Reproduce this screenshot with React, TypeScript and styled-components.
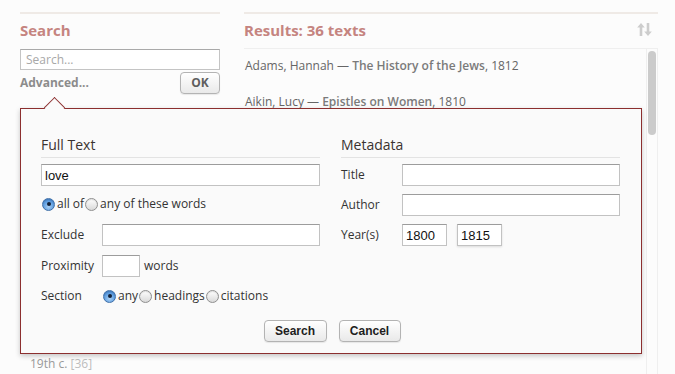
import React from "react";
import styled, { createGlobalStyle } from "styled-components";

const Global = createGlobalStyle`
  html, body { margin: 0; padding: 0; background: #fcfcfc; }
  body { font-family: "Open Sans", "DejaVu Sans", sans-serif; color: #333; }
  * { box-sizing: border-box; }
`;

const Page = styled.div`
  position: relative;
  height: 374px;
  overflow: hidden;
  padding: 12px 0 0 20px;
  display: grid;
  grid-template-columns: 200px 414px;
  column-gap: 24px;
`;

const Column = styled.div`
  border-top: 2px solid #efeae6;
  display: flex;
  flex-direction: column;
  min-height: 0;
`;

const HeadRow = styled.div`
  margin-top: 6px;
  height: 20px;
  display: flex;
  align-items: center;
  justify-content: space-between;
  padding-right: 6px;
`;

const Heading = styled.h2`
  margin: 0;
  font: 700 15px/20px "Open Sans", sans-serif;
  color: #c58480;
`;

const SearchInput = styled.input`
  margin-top: 9px;
  width: 200px;
  height: 22px;
  border: 1px solid #c4c4c4;
  border-top-color: #a9a9a9;
  background: #fff;
  padding: 0 5px;
  font: 12px "Open Sans", sans-serif;
  color: #333;
  outline: none;
  &::placeholder { color: #a8a8a8; }
`;

const AdvancedRow = styled.div`
  margin-top: 2px;
  display: flex;
  align-items: center;
  justify-content: space-between;
`;

const AdvancedLink = styled.span`
  font: 700 12px/16px "Open Sans", sans-serif;
  color: #8c8c8c;
`;

const Button = styled.button<{ $w?: number; $muted?: boolean }>`
  height: 22px;
  width: ${(p) => (p.$w ? `${p.$w}px` : "auto")};
  padding: 0;
  border: 1px solid #b3b3b3;
  border-radius: 4px;
  background: linear-gradient(#ffffff, #e9e9e9);
  box-shadow: 0 1px 1px rgba(0, 0, 0, 0.08);
  font: 700 12px/20px ${(p) => (p.$muted ? `"Open Sans", sans-serif` : `"Liberation Sans", Arial, sans-serif`)};
  color: ${(p) => (p.$muted ? "#5e5e5e" : "#1e1e1e")};
  text-align: center;
`;

const FacetBlock = styled.div`
  margin-top: 240px;
  padding-left: 10px;
`;

const FacetTitle = styled.div`
  font: 700 12px/20px "Open Sans", sans-serif;
  color: #999;
`;

const FacetItem = styled.div`
  font: 12px/20px "Open Sans", sans-serif;
  color: #9a9a9a;
`;

const FacetCount = styled.span`
  color: #bdbdbd;
`;

const ListArea = styled.div`
  margin-top: 8px;
  border-top: 1px solid #efefef;
  flex: 1;
  display: flex;
  min-height: 0;
`;

const Items = styled.div`
  flex: 1;
  padding-left: 1px;
  padding-right: 10px;
`;

const Item = styled.div<{ $extra?: number }>`
  padding: 8px 0 ${(p) => 10 + (p.$extra ?? 0)}px;
  font: 12px/18px "Open Sans", sans-serif;
  color: #666;
`;

const Title = styled.span`
  font-weight: 600;
  color: #7a7a7a;
`;

const Track = styled.div`
  width: 12px;
  border-left: 1px solid #efefef;
  border-right: 1px solid #efefef;
  padding: 2px 1px;
`;

const Thumb = styled.div`
  height: 84px;
  border-radius: 4px;
  background: #cbcbcb;
`;

const Popover = styled.div`
  position: absolute;
  left: 20px;
  top: 108px;
  width: 622px;
  height: 246px;
  border: 1px solid #8c2f2f;
  background: #fafafa;
  box-shadow: 0 2px 5px rgba(0, 0, 0, 0.22);
  padding: 26px 20px 10px 20px;
  display: flex;
  flex-direction: column;
`;

const Arrow = styled.div`
  position: absolute;
  left: 26px;
  top: -9px;
  width: 15px;
  height: 15px;
  background: #fafafa;
  border-top: 1px solid #8c2f2f;
  border-left: 1px solid #8c2f2f;
  transform: rotate(45deg);
`;

const FormGrid = styled.div`
  display: grid;
  grid-template-columns: 279px 279px;
  column-gap: 21px;
`;

const Section = styled.div`
  display: flex;
  flex-direction: column;
`;

const SectionHead = styled.div`
  font: 14px/20px "Open Sans", sans-serif;
  color: #3a3330;
  padding-bottom: 2px;
  border-bottom: 1px solid #e3e3e3;
  margin-bottom: 6px;
`;

const Row = styled.div<{ $gap?: number }>`
  display: flex;
  align-items: center;
  min-height: 20px;
  margin-top: ${(p) => p.$gap ?? 0}px;
  font: 12px/20px "Open Sans", sans-serif;
  color: #333;
`;

const Label = styled.span`
  width: 61px;
  flex: none;
`;

const Field = styled.input<{ $w?: number; $offset?: number; $focus?: boolean }>`
  height: 22px;
  width: ${(p) => (p.$w ? `${p.$w}px` : "auto")};
  flex: ${(p) => (p.$w ? "none" : "1 1 auto")};
  min-width: 0;
  margin-left: ${(p) => p.$offset ?? 0}px;
  border: 1px solid #c2c2c2;
  border-top-color: #9c9c9c;
  background: #fff;
  box-shadow: ${(p) => (p.$focus ? "0 1px 2px rgba(0,0,0,0.12)" : "none")};
  padding: 0 3px;
  font: 13px "Liberation Sans", Arial, sans-serif;
  color: #111;
  outline: none;
`;

const Radio = styled.span<{ $on?: boolean }>`
  flex: none;
  position: relative;
  width: 13px;
  height: 13px;
  border-radius: 50%;
  margin-right: 2px;
  margin-left: 1px;
  border: 1px solid ${(p) => (p.$on ? "#3f6fa8" : "#8f8f8f")};
  background: ${(p) =>
    p.$on
      ? "radial-gradient(circle at 50% 70%, #a9d0f5 0%, #5f9ee0 55%, #3b7cc8 100%)"
      : "linear-gradient(#ffffff, #d9d9d9)"};
  box-shadow: inset 0 1px 1px rgba(0, 0, 0, 0.12);
  &::after {
    content: "";
    display: ${(p) => (p.$on ? "block" : "none")};
    position: absolute;
    left: 50%;
    top: 50%;
    width: 4px;
    height: 4px;
    margin: -2px 0 0 -2px;
    border-radius: 50%;
    background: #142238;
  }
`;

const Suffix = styled.span`
  margin-left: 4px;
`;

const Buttons = styled.div`
  margin-top: 14px;
  display: flex;
  justify-content: center;
  gap: 12px;
  padding-left: 2px;
`;

const SortIcon = () => (
  <svg width="15" height="14" viewBox="0 0 15 14" aria-hidden="true">
    <g fill="#cdcdcd">
      <path d="M4 0 L7.8 4.6 L5.3 4.6 L5.3 13 L2.7 13 L2.7 4.6 L0.2 4.6 Z" />
      <path d="M11 13 L14.8 8.4 L12.3 8.4 L12.3 0 L9.7 0 L9.7 8.4 L7.2 8.4 Z" />
    </g>
  </svg>
);

const results: { author: string; title: string; year: string; extra?: number }[] = [
  { author: "Adams, Hannah", title: "The History of the Jews", year: "1812" },
  { author: "Aikin, Lucy", title: "Epistles on Women", year: "1810" },
  { author: "Aikin, Lucy", title: "Memoirs of the Court of Queen Elizabeth", year: "1818" },
  { author: "Austen, Jane", title: "Pride and Prejudice", year: "1813" },
  {
    author: "Barbauld, Anna Letitia",
    title: "Eighteen Hundred and Eleven, a Poem, and Other Occasional Verses Collected",
    year: "1812",
    extra: 10,
  },
  { author: "Burney, Frances", title: "The Wanderer", year: "1814" },
  { author: "Edgeworth, Maria", title: "Patronage", year: "1814" },
  { author: "Hemans, Felicia", title: "Domestic Affections", year: "1812" },
  { author: "Hofland, Barbara", title: "The Son of a Genius, a Tale for the Use of Youth", year: "1812" },
];

export default function App() {
  return (
    <>
      <Global />
      <Page>
        <Column>
          <HeadRow>
            <Heading>Search</Heading>
          </HeadRow>
          <SearchInput placeholder="Search..." />
          <AdvancedRow>
            <AdvancedLink>Advanced...</AdvancedLink>
            <Button $w={40} $muted>
              OK
            </Button>
          </AdvancedRow>
          <FacetBlock>
            <FacetTitle>Date</FacetTitle>
            <FacetItem>
              19th c. <FacetCount>[36]</FacetCount>
            </FacetItem>
          </FacetBlock>
        </Column>
        <Column>
          <HeadRow>
            <Heading>Results: 36 texts</Heading>
            <SortIcon />
          </HeadRow>
          <ListArea>
            <Items>
              {results.map((r, i) => (
                <Item key={i} $extra={r.extra}>
                  {r.author} — <Title>{r.title}</Title>, {r.year}
                </Item>
              ))}
            </Items>
            <Track>
              <Thumb />
            </Track>
          </ListArea>
        </Column>

        <Popover>
          <Arrow />
          <FormGrid>
            <Section>
              <SectionHead>Full Text</SectionHead>
              <Row>
                <Field defaultValue="love" />
              </Row>
              <Row $gap={8}>
                <Radio $on />
                all of
                <Radio />
                any of these words
              </Row>
              <Row $gap={10}>
                <Label>Exclude</Label>
                <Field />
              </Row>
              <Row $gap={9}>
                <Label>Proximity</Label>
                <Field $w={38} />
                <Suffix>words</Suffix>
              </Row>
              <Row $gap={9}>
                <Label>Section</Label>
                <Radio $on />
                any
                <Radio />
                headings
                <Radio />
                citations
              </Row>
            </Section>
            <Section>
              <SectionHead>Metadata</SectionHead>
              <Row>
                <Label>Title</Label>
                <Field />
              </Row>
              <Row $gap={8}>
                <Label>Author</Label>
                <Field />
              </Row>
              <Row $gap={8}>
                <Label>Year(s)</Label>
                <Field $w={45} defaultValue="1800" />
                <Field $w={45} $offset={10} $focus defaultValue="1815" />
              </Row>
            </Section>
          </FormGrid>
          <Buttons>
            <Button $w={63}>Search</Button>
            <Button $w={62}>Cancel</Button>
          </Buttons>
        </Popover>
      </Page>
    </>
  );
}
